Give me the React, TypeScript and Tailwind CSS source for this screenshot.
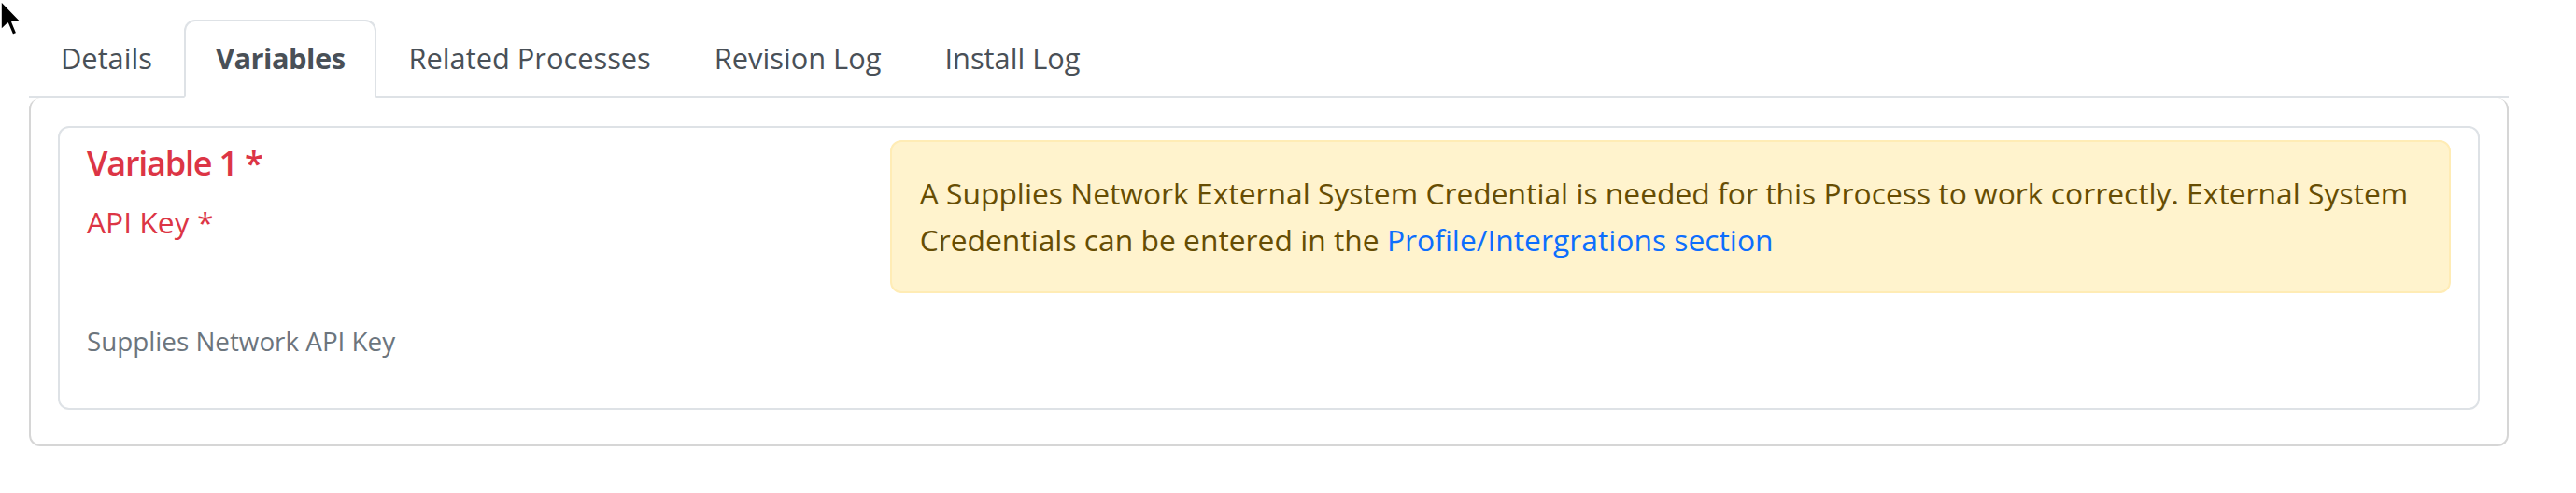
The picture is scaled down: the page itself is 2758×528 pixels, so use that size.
const TABS = ['Details', 'Variables', 'Related Processes', 'Revision Log', 'Install Log']

function Cursor() {
  return (
    <svg className="absolute left-0 top-0" width="28" height="40" viewBox="0 0 14 20">
      <path d="M0.5 0.5 L0.5 16 L4.2 12.6 L6.8 18.8 L9 17.8 L6.5 11.8 L11.5 11.8 Z" fill="#000" stroke="#fff" strokeWidth="0.8" strokeLinejoin="round" />
    </svg>
  )
}

export default function App() {
  const active = 'Variables'
  return (
    <div className="relative bg-white min-h-[528px] pt-[21px] pl-[31px] pr-[72px]" style={{ fontFamily: '"Open Sans", sans-serif' }}>
      <Cursor />

      {/* Tabs */}
      <ul className="flex border-b-2 border-[#dee2e6]">
        {TABS.map((t) => (
          <li key={t} className="-mb-[2px]">
            <span
              className={`block px-[32px] py-[16px] text-[30.8px] leading-[47.7px] border-2 rounded-t-[12px] ${
                t === active ? 'font-bold tracking-[-0.5px] text-[#495057] bg-white border-[#dee2e6] border-b-white' : 'text-[#495057] border-transparent'
              }`}
            >
              {t}
            </span>
          </li>
        ))}
      </ul>

      {/* Tab content */}
      <div className="border-2 border-t-0 border-[#d6d6d6] rounded-[12px] px-[29px] pt-[30px] pb-[37px]">
        <div className="border-2 border-[#dee2e6] rounded-[12px] px-[29px] pt-[13px] pb-[51px]">
          <div className="grid grid-cols-3 gap-x-[48px]">
            <div>
              <h5 className="text-[36px] leading-[50px] font-semibold tracking-[-1.2px] text-[#dc3545] mb-[14px]">Variable 1 *</h5>
              <label className="block text-[31.8px] leading-[47.7px] text-[#dc3545]">API Key *</label>
            </div>
            <div className="col-span-2">
              <div className="bg-[#fff3cd] border-2 border-[#ffecb5] rounded-[12px] px-[30px] py-[30px] text-[31.8px] leading-[50px] text-[#664d03]">
                <span>A Supplies Network External System Credential is needed for this Process to work correctly. External System </span>
                <span>Credentials can be entered in the </span>
                <a className="text-[#0d6efd]">Profile/Intergrations section</a>
              </div>
            </div>
          </div>
          <p className="mt-[31px] text-[27.8px] leading-[41.7px] text-[#6c757d]">Supplies Network API Key</p>
        </div>
      </div>
    </div>
  )
}
